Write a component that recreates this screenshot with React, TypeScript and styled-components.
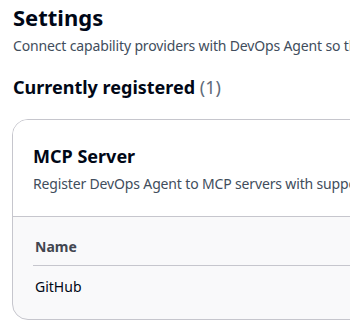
import React from 'react'
import styled, { createGlobalStyle } from 'styled-components'

const Global = createGlobalStyle`
  html, body {
    margin: 0;
    padding: 0;
    background: #ffffff;
    overflow: hidden;
  }
  body {
    font-family: 'Noto Sans', 'Open Sans', sans-serif;
    color: #000716;
  }
`

const Page = styled.div`
  width: 350px;
  height: 323px;
  overflow: hidden;
  padding: 3px 0 0 13px;
  box-sizing: border-box;
`

const Title = styled.h1`
  margin: 0;
  font-size: 22px;
  line-height: 28px;
  font-weight: 700;
  white-space: nowrap;
`

const Lead = styled.p`
  margin: 5px 0 0;
  font-size: 14px;
  line-height: 20px;
  color: #414d5c;
  white-space: nowrap;
  letter-spacing: -0.15px;
`

const SectionTitle = styled.h2`
  margin: 20px 0 0;
  font-size: 18px;
  line-height: 22px;
  font-weight: 700;
  white-space: nowrap;
`

const Count = styled.span`
  font-weight: 400;
  color: #5f6b7a;
`

const Card = styled.section`
  margin: 21px 0 0 -1px;
  width: 640px;
  border: 1px solid #c6c6cd;
  border-radius: 16px;
  overflow: hidden;
  background: #f9f9fa;
`

const CardHeader = styled.header`
  background: #ffffff;
  padding: 25px 20px 22px;
  border-bottom: 1px solid #c6c6cd;
`

const CardTitle = styled.h3`
  margin: 0;
  font-size: 18px;
  line-height: 22px;
  font-weight: 700;
  white-space: nowrap;
`

const CardText = styled.p`
  margin: 7px 0 0;
  font-size: 14px;
  line-height: 20px;
  color: #414d5c;
  white-space: nowrap;
  letter-spacing: -0.15px;
`

const Table = styled.div`
  padding: 20px 20px 22px;
`

const Row = styled.div<{ $head?: boolean }>`
  display: flex;
  padding: ${p => (p.$head ? '0 2px 8px' : '11px 2px 0')};
  border-bottom: ${p => (p.$head ? '1px solid #c6c6cd' : 'none')};
  font-size: 14px;
  line-height: 20px;
  font-weight: ${p => (p.$head ? 700 : 400)};
  color: ${p => (p.$head ? '#424650' : '#000716')};
`

export default function App() {
  return (
    <>
      <Global />
      <Page>
        <Title>Settings</Title>
        <Lead>Connect capability providers with DevOps Agent so that it can use them during investigations.</Lead>
        <SectionTitle>
          Currently registered <Count>(1)</Count>
        </SectionTitle>
        <Card>
          <CardHeader>
            <CardTitle>MCP Server</CardTitle>
            <CardText>Register DevOps Agent to MCP servers with supported authentication methods.</CardText>
          </CardHeader>
          <Table>
            <Row $head>Name</Row>
            <Row>GitHub</Row>
          </Table>
        </Card>
      </Page>
    </>
  )
}
